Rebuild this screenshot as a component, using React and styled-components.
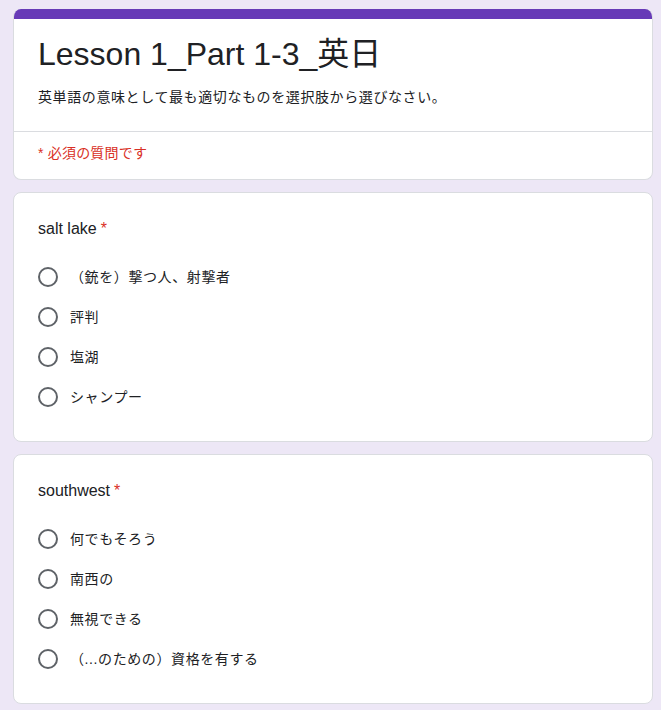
import styled, { createGlobalStyle } from "styled-components";

const GlobalStyle = createGlobalStyle`
  html, body {
    margin: 0;
    padding: 0;
    background: #ede7f6;
  }
  body {
    font-family: "Liberation Sans", "Noto Sans CJK JP", Arial, sans-serif;
    color: #202124;
  }
`;

const questions = [
  {
    title: "salt lake",
    options: ["（銃を）撃つ人、射撃者", "評判", "塩湖", "シャンプー"],
  },
  {
    title: "southwest",
    options: ["何でもそろう", "南西の", "無視できる", "（...のための）資格を有する"],
  },
];

const App = () => {
  return (
    <Page>
      <GlobalStyle />
      <HeaderCard>
        <TopBar />
        <HeaderBody>
          <FormTitle>Lesson 1_Part 1-3_英日</FormTitle>
          <FormDesc>英単語の意味として最も適切なものを選択肢から選びなさい。</FormDesc>
        </HeaderBody>
        <RequiredNote>* 必須の質問です</RequiredNote>
      </HeaderCard>

      {questions.map((q) => (
        <QuestionCard key={q.title}>
          <QuestionTitle>
            {q.title}
            <Asterisk>*</Asterisk>
          </QuestionTitle>
          <OptionList>
            {q.options.map((opt) => (
              <OptionRow key={opt}>
                <Radio />
                <OptionText>{opt}</OptionText>
              </OptionRow>
            ))}
          </OptionList>
        </QuestionCard>
      ))}
    </Page>
  );
};

export default App;

const Page = styled.div`
  display: flex;
  flex-direction: column;
  gap: 12px;
  width: 640px;
  padding: 9px 0 0 13px;
`;

const Card = styled.div`
  background: #fff;
  border: 1px solid #dadce0;
  border-radius: 8px;
  box-sizing: border-box;
  overflow: hidden;
`;

const HeaderCard = styled(Card)`
  border-top: none;
`;

const TopBar = styled.div`
  height: 10px;
  background: #673ab7;
  margin: 0 -1px;
`;

const HeaderBody = styled.div`
  padding: 15px 24px 24px;
  border-bottom: 1px solid #dadce0;
`;

const FormTitle = styled.div`
  font-size: 32px;
  line-height: 40px;
  color: #202124;
  margin-bottom: 13px;
`;

const FormDesc = styled.div`
  font-size: 14px;
  line-height: 20px;
  letter-spacing: 0.6px;
  color: #202124;
`;

const RequiredNote = styled.div`
  padding: 11px 24px 16px;
  font-size: 14px;
  line-height: 20px;
  letter-spacing: 0.2px;
  color: #d93025;
`;

const QuestionCard = styled(Card)`
  padding: 24px 24px 24px;
`;

const QuestionTitle = styled.div`
  font-size: 16px;
  line-height: 24px;
  color: #202124;
  margin-bottom: 16px;
`;

const Asterisk = styled.span`
  color: #d93025;
  margin-left: 4px;
`;

const OptionList = styled.div`
  display: flex;
  flex-direction: column;
`;

const OptionRow = styled.div`
  display: flex;
  align-items: center;
  height: 40px;
  gap: 12px;
`;

const Radio = styled.div`
  width: 20px;
  height: 20px;
  box-sizing: border-box;
  border: 2px solid #5f6368;
  border-radius: 50%;
  flex-shrink: 0;
`;

const OptionText = styled.span`
  font-size: 14px;
  line-height: 20px;
  letter-spacing: 0.6px;
  color: #202124;
`;
